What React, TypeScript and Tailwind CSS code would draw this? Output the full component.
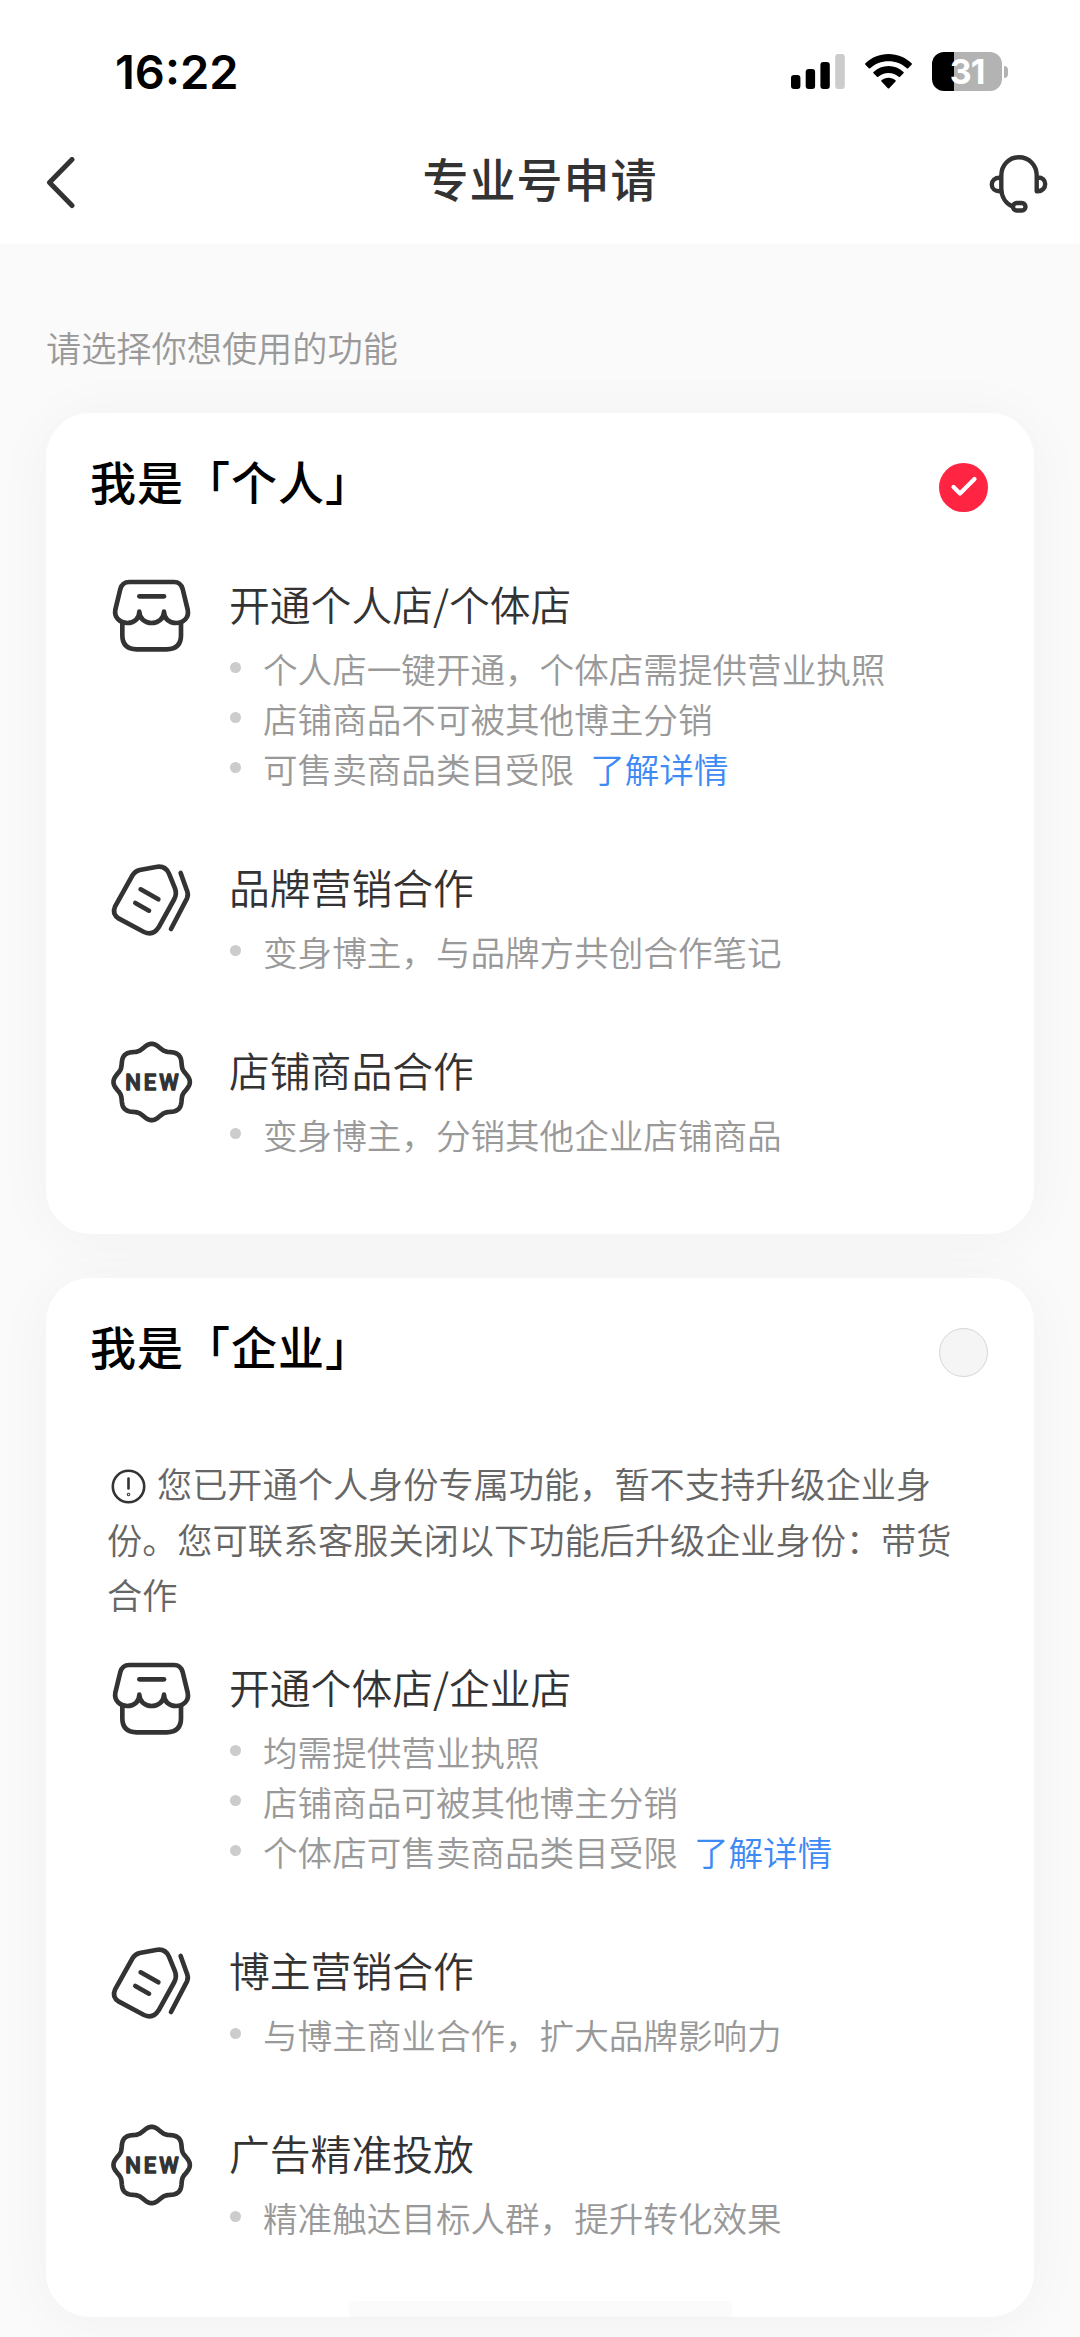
import { useState } from "react";
import clsx from "clsx";

type IconName = "shop" | "tag" | "new";

interface Feature {
  readonly icon: IconName;
  readonly title: string;
  readonly points: string[];
  readonly link?: string;
}

interface Identity {
  readonly id: string;
  readonly title: string;
  readonly notice?: string;
  readonly features: Feature[];
}

const identities: Identity[] = [
  {
    id: "personal",
    title: "我是「个人」",
    features: [
      {
        icon: "shop",
        title: "开通个人店/个体店",
        points: [
          "个人店一键开通，个体店需提供营业执照",
          "店铺商品不可被其他博主分销",
          "可售卖商品类目受限",
        ],
        link: "了解详情",
      },
      {
        icon: "tag",
        title: "品牌营销合作",
        points: ["变身博主，与品牌方共创合作笔记"],
      },
      {
        icon: "new",
        title: "店铺商品合作",
        points: ["变身博主，分销其他企业店铺商品"],
      },
    ],
  },
  {
    id: "company",
    title: "我是「企业」",
    notice:
      "您已开通个人身份专属功能，暂不支持升级企业身份。您可联系客服关闭以下功能后升级企业身份：带货合作",
    features: [
      {
        icon: "shop",
        title: "开通个体店/企业店",
        points: [
          "均需提供营业执照",
          "店铺商品可被其他博主分销",
          "个体店可售卖商品类目受限",
        ],
        link: "了解详情",
      },
      {
        icon: "tag",
        title: "博主营销合作",
        points: ["与博主商业合作，扩大品牌影响力"],
      },
      {
        icon: "new",
        title: "广告精准投放",
        points: ["精准触达目标人群，提升转化效果"],
      },
    ],
  },
];

// Eight-lobed outline of the "NEW" badge
const badgePath =
  Array.from({ length: 180 }, (_, i) => {
    const a = (i * Math.PI) / 90;
    const r = 107.5 + 7 * Math.cos(8 * a);
    const x = (125 + r * Math.sin(a)).toFixed(1);
    const y = (120 - r * Math.cos(a)).toFixed(1);
    return `${i === 0 ? "M" : "L"}${x} ${y}`;
  }).join("") + "Z";

const FeatureIcon = ({ name }: { name: IconName }) => (
  <svg
    viewBox="0 0 252 240"
    className="mt-[2px] h-20 w-[84px] shrink-0 overflow-visible"
    fill="none"
    stroke="#333"
    strokeWidth={14}
    strokeLinecap="round"
    strokeLinejoin="round"
  >
    {name === "shop" && (
      <>
        <path d="M88 107C88 128 72 141 52 141C29 141 12 124 16 101L31 39Q37 18 58 18H192Q212 18 218 39L233 101C238 124 221 141 198 141C178 141 162 128 162 107C162 128 144 141 125 141C106 141 88 128 88 107Z" />
        <path d="M88 61H162" />
        <path d="M37 141V178Q37 220 80 220H170Q213 220 213 178V141" />
      </>
    )}
    {name === "tag" && (
      <>
        <path d="M89 33L138 24Q166 19 177 44L195 88Q201 104 193 120L146 205Q129 232 102 219L27 179Q5 165 15 143L68 48Q76 36 89 33Z" />
        <path d="M212 42L231 95Q236 107 231 118L183 210" />
        <path d="M92 91L145 121" />
        <path d="M76 132L117 155" />
      </>
    )}
    {name === "new" && (
      <>
        <path d={badgePath} />
        <text
          x="46 101 148"
          y="144"
          fontFamily="Roboto, sans-serif"
          fontSize="66"
          fontWeight="500"
          fill="#333"
          strokeWidth={4}
        >
          NEW
        </text>
      </>
    )}
  </svg>
);

const StatusBar = () => (
  <div className="flex h-[124px] items-start justify-between pr-[72px] pl-[115px]">
    <span className="mt-[44px] font-['Inter'] text-[47px] leading-[56px] font-semibold text-black">
      16:22
    </span>
    <div className="mt-[52px] flex h-[39px] items-center">
      <svg width="54" height="35" viewBox="0 0 54 35">
        <rect x="0" y="21" width="9.4" height="14" rx="3" />
        <rect x="14.7" y="15" width="9.4" height="20" rx="3" />
        <rect x="29.4" y="8" width="9.4" height="27" rx="3" />
        <rect x="44.2" y="0" width="9.6" height="35" rx="3" fill="#ccc" />
      </svg>
      <svg className="ml-5" width="47" height="35" viewBox="0 0 47 35">
        <path d="M23.5 0C32.500 0 40.700 3.500 46.600 9.300Q47.200 10 46.600 10.700L43.200 14.200Q42.500 14.800 41.800 14.200C37 9.700 30.600 7.200 23.500 7.200S10 9.700 5.200 14.200Q4.500 14.800 3.800 14.200L.4 10.700Q-.2 10 .4 9.300C6.300 3.500 14.500 0 23.500 0Z" />
        <path d="M23.500 12C29.300 12 34.500 14.200 38.500 17.900Q39.200 18.600 38.500 19.300L35 22.700Q34.400 23.300 33.700 22.700C31 20.300 27.500 18.900 23.500 18.900S16 20.300 13.300 22.700Q12.600 23.300 12 22.700L8.500 19.300Q7.800 18.600 8.500 17.900C12.500 14.200 17.700 12 23.500 12Z" />
        <path d="M23.500 23.700C26.200 23.700 28.600 24.600 30.500 26.200Q31.200 26.900 30.500 27.600L24.200 34.200Q23.500 34.900 22.800 34.200L16.500 27.600Q15.800 26.900 16.500 26.200C18.400 24.600 20.800 23.700 23.500 23.700Z" />
      </svg>
      <div className="ml-5 flex h-[39px] w-[70px] items-center justify-center rounded-[12px] bg-[linear-gradient(90deg,#000_31%,#b3b3b3_31%)] font-['Inter'] text-[34px] leading-none font-bold tracking-[-1px] text-white">
        31
      </div>
      <div className="ml-0.5 h-3 w-1 rounded-r-full bg-[#b3b3b3]" />
    </div>
  </div>
);

const NavBar = () => (
  <div className="grid h-[120px] grid-cols-[1fr_auto_1fr] items-center pr-[32px] pl-[46px]">
    <svg
      className="-mt-0.5"
      width="60"
      height="52"
      viewBox="0 0 60 52"
      fill="none"
      stroke="#333"
      strokeWidth={5}
      strokeLinecap="round"
      strokeLinejoin="round"
    >
      <path d="M26 2.500L3.500 25.500L26 48.500" />
    </svg>
    <h1 className="-mt-3.5 mr-[14px] text-[46px] leading-[60px] font-medium tracking-[1px] text-[#333]">
      专业号申请
    </h1>
    <svg
      className="-mr-px justify-self-end"
      width="60"
      height="60"
      viewBox="0 0 60 60"
      fill="none"
      stroke="#333"
      strokeWidth={4.4}
      strokeLinejoin="round"
    >
      <path d="M24.500 53C17 50 12.300 43 12.300 34.500V21.500C12.300 11 20 3.300 30 3.300S47.700 11 47.700 21.500V37.300H49C53 37.300 56.200 34 56.200 30S53 23.500 49 23.500H47.700" />
      <path d="M12.300 23.700H10.500C6 23.700 2.800 26.500 2.800 30.500S6 37.300 10.500 37.300H12.300" />
      <rect x="24" y="49" width="12.500" height="7.500" rx="3.700" />
    </svg>
  </div>
);

const Radio = ({ checked }: { checked: boolean }) => (
  <span
    className={clsx(
      "mt-[14px] flex size-[49px] items-center justify-center rounded-full",
      checked ? "bg-[#ff2442]" : "border border-[#d5d5d5] bg-[#f5f5f5]"
    )}
  >
    {checked && (
      <svg
        width="28"
        height="22"
        viewBox="0 0 28 22"
        fill="none"
        stroke="#fff"
        strokeWidth={4.2}
        strokeLinecap="round"
        strokeLinejoin="round"
      >
        <path d="M3.500 11L10 17.500L24.500 3" />
      </svg>
    )}
  </span>
);

const FeatureRow = ({ icon, title, points, link }: Feature) => (
  <div className="flex gap-[35px]">
    <FeatureIcon name={icon} />
    <div>
      <h3 className="text-[40.8px] leading-[60px] text-[#333]">{title}</h3>
      <ul className="mt-[9px] text-[34.6px] leading-[50px] text-[#999]">
        {points.map((point, index) => (
          <li key={point} className="flex">
            <span className="mt-[19px] mr-[22px] ml-px size-[11px] rounded-full bg-[#ccc]" />
            {point}
            {link && index === points.length - 1 && (
              <a className="ml-4 text-[#3d8af5]">{link}</a>
            )}
          </li>
        ))}
      </ul>
    </div>
  </div>
);

const App = () => {
  const [selected, setSelected] = useState("personal");

  return (
    <div className="relative h-[2337px] w-[1080px] overflow-hidden bg-[#fafafa] font-['Noto_Sans_CJK_SC',sans-serif] font-[350]">
      <header className="bg-white">
        <StatusBar />
        <NavBar />
      </header>

      <main className="px-[46px]">
        <p className="pt-[78px] text-[35.2px] leading-[50px] text-[#999]">
          请选择你想使用的功能
        </p>

        <div className="mt-[41px] flex flex-col gap-[44px]">
          {identities.map(({ id, title, notice, features }) => (
            <section
              key={id}
              className="rounded-[44px] bg-white pt-[31px] pb-[75px] shadow-[0_4px_60px_rgba(0,0,0,0.04)]"
              onClick={() => setSelected(id)}
            >
              <div className="flex h-[72px] items-center justify-between pr-[46px] pl-[44px]">
                <h2 className="text-[46px] leading-[72px] font-medium tracking-[1px] text-black">
                  {title}
                </h2>
                <Radio checked={selected === id} />
              </div>

              {notice && (
                <p className="mt-[74px] -mb-[23px] pr-[69px] pl-[61px] text-[35.2px] leading-[55.500px] text-[#666]">
                  <svg
                    className="mr-[11px] ml-[4px] inline-block align-[-6px]"
                    width="35"
                    height="35"
                    viewBox="0 0 35 35"
                    fill="none"
                    stroke="#333"
                    strokeWidth={2.6}
                    strokeLinecap="round"
                  >
                    <circle cx="17.500" cy="17.500" r="15.700" />
                    <path d="M17.500 9.500V19.500" />
                    <circle cx="17.500" cy="25.500" r="0.500" />
                  </svg>
                  {notice}
                </p>
              )}

              <div className="mt-[58px] flex flex-col gap-[64px] pl-[64px]">
                {features.map((feature) => (
                  <FeatureRow key={feature.title} {...feature} />
                ))}
              </div>
            </section>
          ))}
        </div>
      </main>

      {/* Home indicator */}
      <div className="absolute bottom-[19px] left-[349px] h-[17px] w-[383px] rounded-sm bg-black/[0.015]" />
    </div>
  );
};

export default App;
